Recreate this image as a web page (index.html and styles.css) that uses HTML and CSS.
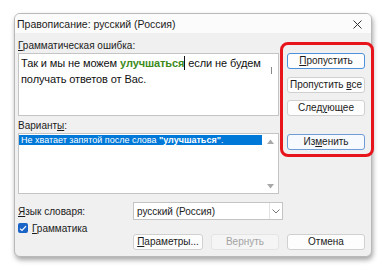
FILE: index.html
```html
<!DOCTYPE html>
<html lang="ru">
<head>
<meta charset="utf-8">
<link rel="stylesheet" href="styles.css">
</head>
<body>
<div class="dialog">
  <div class="titlebar">
    <span class="title">Правописание: русский (Россия)</span>
    <svg class="close" width="9" height="9" viewBox="0 0 9 9"><path d="M0.5 0.5 L8.5 8.5 M8.5 0.5 L0.5 8.5" stroke="#333" stroke-width="1" fill="none"/></svg>
  </div>
  <div class="content">
    <div class="top">
      <div class="left">
        <div class="label"><u>Г</u>рамматическая ошибка:</div>
        <div class="textbox">
          <div class="text">
            <div class="line">Так и мы не можем <b class="err">улучшаться</b><span class="caret"></span> если не будем</div>
            <div class="line">получать ответов от Вас.</div>
          </div>
          <div class="thumb"></div>
        </div>
        <div class="label label2">Вариант<u>ы</u>:</div>
        <div class="listbox">
          <div class="items">
            <div class="item sel">Не хватает запятой после слова <b>"улучшаться"</b>.</div>
          </div>
          <div class="vscroll">
            <svg width="7" height="5" viewBox="0 0 7 5"><path d="M0 5 L3.5 0.5 L7 5 Z" fill="#a8a8a8"/></svg>
            <svg width="7" height="5" viewBox="0 0 7 5"><path d="M0 0 L3.5 4.5 L7 0 Z" fill="#a8a8a8"/></svg>
          </div>
        </div>
      </div>
      <div class="right">
        <button class="btn focus"><u>П</u>ропустить</button>
        <button class="btn b2">Пропустить <u>в</u>се</button>
        <button class="btn b3">След<u>у</u>ющее</button>
        <button class="btn default b4">Из<u>м</u>енить</button>
      </div>
    </div>
    <div class="langrow">
      <div class="label lang"><u>Я</u>зык словаря:</div>
      <div class="combo">
        <span>русский (Россия)</span>
        <span class="chev"><svg width="8" height="5" viewBox="0 0 8 5"><path d="M0.5 0.5 L4 4 L7.5 0.5" stroke="#777" stroke-width="1" fill="none"/></svg></span>
      </div>
    </div>
    <div class="checkrow">
      <span class="check"><svg width="8" height="7" viewBox="0 0 8 7"><path d="M1 3.6 L3 5.5 L7 1.2" stroke="#fff" stroke-width="1.2" fill="none"/></svg></span>
      <span class="label"><u>Г</u>рамматика</span>
    </div>
    <div class="bottom">
      <button class="btn wide-a"><u>П</u>араметры...</button>
      <button class="btn disabled wide-b">Вернуть</button>
      <button class="btn">Отмена</button>
    </div>
  </div>
</div>
<div class="highlight"></div>
</body>
</html>
```
FILE: styles.css
```css
html, body {
  margin: 0;
  padding: 0;
  background: #ffffff;
  width: 385px;
  height: 270px;
  overflow: hidden;
  position: relative;
  font-family: "Liberation Sans", Arial, sans-serif;
  color: #1b1b1b;
}
.dialog {
  margin: 13px 0 0 14px;
  width: 356px;
  height: 242px;
  border: 1px solid #b9b9b9;
  border-radius: 6px;
  background: #f0f0f0;
  box-shadow: 1px 3px 5px rgba(0,0,0,0.35);
  display: flex;
  flex-direction: column;
  overflow: hidden;
}
.titlebar {
  height: 19px;
  background: #fbfbfb;
  display: flex;
  align-items: center;
  justify-content: space-between;
  padding: 0 9px 0 2px;
  font-size: 10.5px;
}
.title { padding-top: 1px; }
.close { margin-top: 1px; }
.content {
  padding: 6px 6px 0 3px;
  display: flex;
  flex-direction: column;
}
.top {
  display: grid;
  grid-template-columns: 261px 78px;
  column-gap: 8px;
}
.label {
  font-size: 10px;
  line-height: 13px;
  height: 13px;
}
.left .label { margin-bottom: 1px; }
.label2 { margin-top: 3px; }
.textbox {
  height: 61px;
  background: #fff;
  border: 1px solid #c4c4c4;
  position: relative;
}
.text {
  font-size: 11px;
  line-height: 16px;
  padding: 1px 16px 0 2px;
  color: #111;
  letter-spacing: -0.1px;
}
.line { white-space: nowrap; height: 16px; }
.err { color: #3c8b1c; }
.caret {
  display: inline-block;
  width: 1px;
  height: 14px;
  background: #111;
  vertical-align: -3px;
}
.thumb {
  position: absolute;
  right: 6px;
  top: 13px;
  width: 1px;
  height: 7px;
  background: #888;
}
.listbox {
  height: 59px;
  background: #fff;
  border: 1px solid #c4c4c4;
  display: flex;
}
.items { flex: 1; padding-top: 1px; }
.item {
  font-size: 9px;
  line-height: 10px;
  height: 10px;
  padding-left: 2px;
}
.item.sel { background: #0078d7; color: #fff; }
.vscroll {
  width: 16px;
  display: flex;
  flex-direction: column;
  justify-content: space-between;
  align-items: center;
  padding: 5px 0 4px;
}
.right {
  display: flex;
  flex-direction: column;
  padding-top: 14px;
}
.btn {
  height: 16px;
  width: 78px;
  padding: 0;
  background: #fdfdfd;
  border: 1px solid #d0d0d0;
  border-radius: 3px;
  font-family: "Liberation Sans", Arial, sans-serif;
  font-size: 10px;
  line-height: 14px;
  color: #1b1b1b;
}
.btn.focus { border-color: #4d90dc; }
.btn.default { border-color: #6f9bd6; background: #f6f9fd; }
.b2 { margin-top: 8px; }
.b3 { margin-top: 7px; }
.b4 { margin-top: 18px; }
.langrow {
  display: flex;
  align-items: center;
  margin-top: 8px;
}
.lang { width: 115px; }
.combo {
  width: 145px;
  height: 16px;
  background: #fff;
  border: 1px solid #c4c4c4;
  display: flex;
  align-items: center;
  justify-content: space-between;
  font-size: 10px;
  padding-left: 3px;
}
.chev {
  width: 12px;
  height: 16px;
  border-left: 1px solid #e2e2e2;
  display: flex;
  align-items: center;
  justify-content: center;
}
.checkrow {
  display: flex;
  align-items: center;
  gap: 4px;
  margin-top: 3px;
  height: 10px;
}
.check {
  width: 10px;
  height: 10px;
  border-radius: 2px;
  background: #1a64c8;
  display: flex;
  align-items: center;
  justify-content: center;
}
.bottom {
  display: flex;
  justify-content: flex-end;
  gap: 8px;
  margin-top: 1px;
}
.wide-a { width: 70px; }
.wide-b { width: 68px; }
.btn.disabled {
  color: #a3a3a3;
  background: #f5f5f5;
  border-color: #e4e4e4;
}
.highlight {
  position: absolute;
  left: 280px;
  top: 42px;
  width: 88px;
  height: 109px;
  border: 3px solid #e8141c;
  border-radius: 8px;
}
```
